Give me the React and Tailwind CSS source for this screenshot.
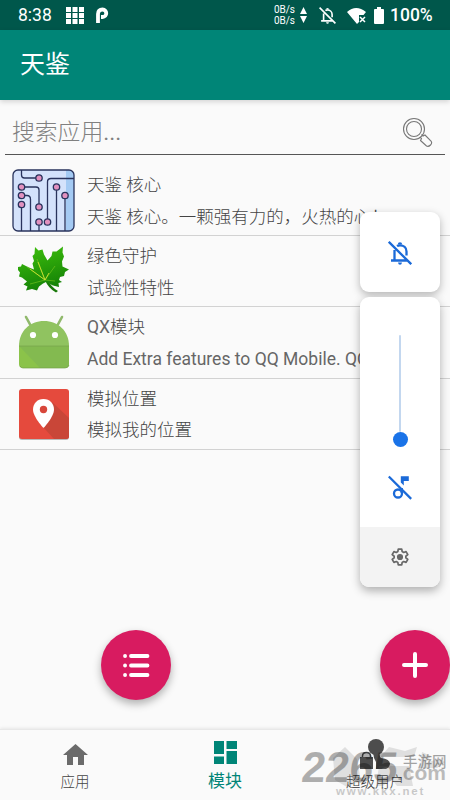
const textFont = "font-[Roboto,'Noto_Sans_CJK_SC',sans-serif]";

function CircuitIcon() {
  const dots = [[27, 9], [9.5, 18], [9.5, 26.5], [9.5, 35.5], [27, 38], [27, 53], [35.5, 53], [44.5, 18], [53, 26.5]];
  return (
    <svg width="63" height="63" viewBox="0 0 63 63" fill="none" stroke="#29335c" strokeWidth="1.3">
      <rect x="1" y="1" width="61" height="61" rx="5" fill="#d4e2fb" stroke="none" />
      <path d="M54 1h3a5 5 0 0 1 5 5v51a5 5 0 0 1-5 5h-3z" fill="#a4caf3" stroke="none" />
      <path d="M9.5 1v5q0 3 3 3H24M12.500 18H24q3 0 3 3v14M12.500 26.500H15q3.500 0 3.500 4V62M9.500 38.500V62M27 56v6M35.500 50V13q0-3.500 3.500-3.500H62M44.500 21v41M53 29.500V62" />
      <rect x="1" y="1" width="61" height="61" rx="5" />
      {dots.map(([x, y]) => <circle key={x + "-" + y} cx={x} cy={y} r="3.2" fill="#e291bf" />)}
    </svg>
  );
}

function LeafIcon() {
  return (
    <svg width="52" height="52" viewBox="0 0 52 52">
      <defs>
        <linearGradient id="leaf" x1="0" y1="0" x2="0.3" y2="1">
          <stop offset="0" stopColor="#3fc20c" />
          <stop offset="1" stopColor="#168407" />
        </linearGradient>
      </defs>
      <path d="M27 35Q30 43 38 47.500l2-1.500Q33 42 29 34z" fill="#197809" />
      <path d="M17 2l3.500 3.500 4-1 1.500 5 3.500 6 4-4.500 1-4.500 4 0 6.500-5-.5 6 1.500 4-2 5 .5 5 6.500 3-4 2.500-1 4-4 1-1 3 3 2-3.500 1 .5 4-6-1.500-7-3.500-3 1.500-4 3-2 4-5-1.500-6 1.500 1.500-4-4-2 3.500-3-5-4-3-1 1-4-4-5 5-1 1-2.500 7 3.500 5 2-1.500-6 1.500-2.500-1.500-5 2-2z" fill="url(#leaf)" />
      <path d="M27 35L9 22M27 35L19 14M27 35L37 21M27 35L12 39M27 35l10 1" stroke="#6fc01c" strokeWidth=".7" fill="none" />
      <path d="M27 35L12 24M27 35L20 17M27 35l4-7" stroke="#cfe033" strokeWidth=".9" />
    </svg>
  );
}

function AndroidIcon() {
  return (
    <svg width="52" height="54" viewBox="0 0 52 54">
      <path d="M8 2l6 11M44 2l-6 11" stroke="#90b96c" strokeWidth="2.600" strokeLinecap="round" />
      <path d="M1 31C1 16 12 6 26 6s25 10 25 25z" fill="#90c360" />
      <path d="M1 31h50v18q0 4-4 4H5q-4 0-4-4z" fill="#8bc34a" />
      <path d="M1 31h50v18q0 4-4 4H22z" fill="#80b553" opacity=".65" />
      <path d="M1 31h50" stroke="#78a64d" strokeWidth=".8" />
      <path d="M2 51q1 2 3 2h42q3 0 4-3" stroke="#74a048" strokeWidth=".7" fill="none" />
      <circle cx="15" cy="20" r="3.100" fill="#fff" />
      <circle cx="37" cy="20" r="3.100" fill="#fff" />
    </svg>
  );
}

function PlaceIcon() {
  return (
    <svg width="52" height="52" viewBox="0 0 52 52">
      <rect x="1" y="2" width="50" height="50" rx="3" fill="#b9b9b9" />
      <rect x="1" y="1" width="50" height="50" rx="3" fill="#e54a3d" />
      <path d="M34 14l17 16v18q0 3-3 3H36L25 39z" fill="#c94638" />
      <path d="M25.500 11C19 11 15 16 15 21.500 15 29 25.500 40 25.500 40S36 29 36 21.500C36 16 32 11 25.500 11z" fill="#fff" />
      <circle cx="25.500" cy="21.500" r="3.700" fill="#d8473b" />
    </svg>
  );
}

function BellOff({ className }) {
  return (
    <svg className={className} viewBox="0 0 24 24" fill="none" stroke="currentColor" strokeWidth="2.3">
      <path d="M3 19.500h16M6.500 19V9M9 5q1-.7 3-.7c3.500 0 6.500 2.400 6.500 6.200v4M.8.8l22.400 22.400" />
      <path d="M9.800 3.500a2.200 2.200 0 1 1 4.400 0M10 21.500h4q-.3 2.300-2 2.300t-2-2.300z" fill="currentColor" stroke="none" />
    </svg>
  );
}

function StatusBar() {
  return (
    <div className="flex h-[30px] shrink-0 items-center bg-[#00574b] text-white">
      <span className="ml-[18px] w-[48px] text-[17.5px]">8:38</span>
      <svg width="18" height="17" viewBox="0 0 18 17" fill="currentColor">
        <path d="M0 0h5v5H0zM6.500 0h5v5h-5zM13 0h5v5h-5zM0 6h5v5H0zM6.500 6h5v5h-5zM13 6h5v5h-5zM0 12h5v5H0zM6.500 12h5v5h-5zM13 12h5v5h-5z" />
      </svg>
      <svg className="ml-3" width="13" height="17" viewBox="0 0 13 17" fill="none" stroke="currentColor" strokeWidth="3.8">
        <path d="M2 16V7q0-4.500 4.500-4.500c5 0 5 7.500 0 7.500H5" />
      </svg>
      <div className="ml-[165px] flex w-[22px] flex-col text-[10px] leading-[11.5px] tracking-[-0.1px]">
        <span>0B/s</span>
        <span>0B/s</span>
      </div>
      <svg className="ml-[4px]" width="7" height="16" viewBox="0 0 7 16" fill="currentColor">
        <path d="M3.500 0L7 7H0zM0 9h7l-3.500 7z" />
      </svg>
      <BellOff className="ml-[12px] size-[17px]" />
      <svg className="ml-[11px]" width="20" height="17" viewBox="0 0 20 17" fill="currentColor">
        <path d="M0 5Q9-3 19 5l-2.500 3H12v7l-2 2z" />
        <path d="M13 10l5 5m0-5l-5 5" stroke="currentColor" strokeWidth="1.500" />
      </svg>
      <svg className="ml-[7px]" width="10" height="17" viewBox="0 0 10 17" fill="currentColor">
        <path d="M3 0h4v2h2q1 0 1 1v13q0 1-1 1H1q-1 0-1-1V3q0-1 1-1h2z" />
      </svg>
      <span className="ml-[6px] text-[17.5px] font-medium">100%</span>
    </div>
  );
}

const modules = [
  { title: "天鉴 核心", desc: "天鉴 核心。一颗强有力的，火热的心！", icon: <CircuitIcon /> },
  { title: "绿色守护", desc: "试验性特性", icon: <LeafIcon /> },
  { title: "QX模块", desc: "Add Extra features to QQ Mobile. QQ", icon: <AndroidIcon /> },
  { title: "模拟位置", desc: "模拟我的位置", icon: <PlaceIcon /> },
];

// latin text is regular weight, the CJK face next to it is the light one
function Mixed({ text }) {
  return text.split(/([A-Za-z][A-Za-z .]*)/).map((part, i) =>
    /^[A-Za-z]/.test(part) ? <span key={i} className="font-normal text-[#666]">{part}</span> : part
  );
}

function ModuleList() {
  return (
    <div className="flex flex-col pt-[10px]">
      {modules.map((item) => (
        <div key={item.title} className="flex h-[71.2px] items-center border-b border-[#d2d2d2]">
          <div className="flex w-[87px] shrink-0 justify-center">{item.icon}</div>
          <div className="flex flex-col overflow-hidden pt-[3px] whitespace-nowrap text-[17.500px] leading-[31.500px] font-light text-[#444]">
            <span><Mixed text={item.title} /></span>
            <span><Mixed text={item.desc} /></span>
          </div>
        </div>
      ))}
    </div>
  );
}

function VolumePanel() {
  return (
    <div className="absolute top-[212px] right-[10px] flex w-20 flex-col gap-[5px] text-[#1b6ad8]">
      <div className="flex h-20 items-center justify-center rounded-[9px] bg-white pt-px shadow-[0_3px_9px_rgba(0,0,0,0.28)]">
        <BellOff className="size-6" />
      </div>
      <div className="flex h-[290px] flex-col items-center overflow-hidden rounded-[9px] bg-white pt-[38px] shadow-[0_4px_10px_rgba(0,0,0,0.3)]">
        <div className="h-[97px] w-[2px] rounded bg-[#c3d7ef]" />
        <div className="size-[15px] rounded-full bg-[#1a73e8]" />
        <svg className="mt-7" width="24" height="25" viewBox="0 0 24 25" fill="none" stroke="currentColor" strokeWidth="2.3">
          <circle cx="10" cy="18.500" r="4" />
          <path d="M.8 1.500l22.400 22.400M13.800 13v5" />
          <path d="M12.800 1.200h8V6h-5v4.500l-3-3z" fill="currentColor" stroke="none" />
        </svg>
        <div className="mt-auto flex h-[60px] w-full items-center justify-center bg-[#f3f3f3]">
          <svg width="18" height="18" viewBox="0 0 24 24" fill="none" stroke="#686868" strokeWidth="2.3">
            <path strokeLinejoin="round" d="M9.700 1.500h4.600l.6 3.300 2 1.200 3.200-1.200 2.300 4L19.800 11v2l2.600 2.200-2.300 4-3.200-1.200-2 1.200-.6 3.300H9.700l-.6-3.300-2-1.200-3.200 1.200-2.300-4L4.200 13v-2L1.600 8.800l2.300-4L7.100 6l2-1.200z" />
            <circle cx="12" cy="12" r="3" fill="#686868" />
          </svg>
        </div>
      </div>
    </div>
  );
}

function BottomNav() {
  return (
    <div className="grid h-[71px] shrink-0 grid-cols-3 border-t border-[#e8e8e8] bg-[#fafafa] text-[#444] shadow-[0_-1px_3px_rgba(0,0,0,0.08)]">
      <div className="flex flex-col items-center pt-[14px]">
        <svg width="25" height="21" viewBox="0 0 25 21" fill="#6b6b6b"><path d="M12.500 0L25 11h-4v10h-6v-8h-5v8H4V11H0z" /></svg>
        <span className="mt-[8px] text-[14.500px] leading-5 font-light">应用</span>
      </div>
      <div className="flex flex-col items-center pt-[11px] text-[#008577]">
        <svg width="23" height="23" viewBox="0 0 23 23" fill="currentColor"><path d="M0 0h10v13H0zM12.500 0H23v8H12.500zM0 15.500h10V23H0zM12.500 10H23v13H12.500z" /></svg>
        <span className="mt-[5px] text-[17px] leading-6">模块</span>
      </div>
      <div className="flex flex-col items-center pt-[9px] text-[#333]">
        <svg width="30" height="31" viewBox="0 0 30 31" fill="#4d4d4d">
          <circle cx="16" cy="8" r="8" />
          <path d="M13 13h7q-1 4 1 6 9 1 9 6-1 4-4 5H16V23l-2-4zM0 18h13v12H0z" />
          <path d="M2.500 19v-2q0-3.500 4-3.500t4 3.500v2" fill="none" stroke="#4d4d4d" strokeWidth="1.500" />
        </svg>
        <span className="mt-[3px] text-[14.500px] leading-5 font-light">超级用户</span>
      </div>
    </div>
  );
}

function SiteMark() {
  return (
    <div className="pointer-events-none absolute right-0 bottom-0 h-[56px] w-[151px] font-['Liberation_Sans','Noto_Sans_CJK_SC',sans-serif] font-bold text-black">
      <svg className="absolute top-[2px] left-[32px]" width="115" height="42" viewBox="0 0 115 42" fill="#777" opacity=".2">
        <path d="M2 12L14 1l12 12 4 22-14 6L4 34zM50 10l8-9 16 4 12-4-3 10H50zM48 20h30l4 20H66l-6-8-8 8h-7zM91 6l9 4-6 7 14-4 6 3-8 6H89z" />
      </svg>
      <span className="absolute top-[2px] left-[3px] -skew-x-6 text-[43px] leading-[42px] opacity-30">2265</span>
      <span className="absolute top-[10px] left-[104px] text-[14.500px] leading-4 font-medium whitespace-nowrap opacity-35">手游网</span>
      <span className="absolute top-[17px] left-[98px] text-[21px] leading-6 opacity-25">.com</span>
      <span className="absolute top-[41px] left-[37px] text-[11.5px] leading-3 tracking-[1.8px] opacity-20">www.kkx.net</span>
    </div>
  );
}

export default function App() {
  return (
    <div className={`${textFont} relative flex h-[800px] w-[450px] flex-col overflow-hidden bg-[#fafafa]`}>
      <StatusBar />
      <header className="flex h-[70px] shrink-0 items-center bg-[#008577] pl-[20px] text-[25px] text-white shadow-[0_2px_5px_rgba(0,0,0,0.15)]">天鉴</header>
      <main className="flex-1">
        <div className="mx-[5px] flex h-[55px] items-center justify-between border-b border-[#555] pt-[10px] pr-3 pl-[7px]">
          <span className="pt-[3px] text-[22.800px] font-light text-[#808080]">搜索应用<span className="font-normal">...</span></span>
          <svg width="31" height="31" viewBox="0 0 31 31" fill="none" stroke="#777" strokeWidth="1.100">
            <circle cx="12" cy="12" r="10.500" />
            <circle cx="12" cy="12" r="7.500" />
            <path d="M18 20l1.500 1.500-1 2 6 5.500q2 1 4-1t.5-4L23 18l-2 1-1.500-1.500" />
          </svg>
        </div>
        <ModuleList />
      </main>
      <button className="absolute top-[630px] left-[101px] flex size-[70px] items-center justify-center rounded-full bg-[#d81b60] shadow-[0_4px_8px_rgba(0,0,0,0.3)]">
        <svg width="27" height="23" viewBox="0 0 27 23" stroke="#fff" strokeWidth="3.800" strokeLinecap="round">
          <path d="M2 2h.1M8 2h16.500M2 11.500h.1M8 11.500h16.500M2 21h.1M8 21h16.500" />
        </svg>
      </button>
      <button className="absolute top-[630px] right-0 flex size-[70px] items-center justify-center rounded-full bg-[#d81b60] shadow-[0_4px_8px_rgba(0,0,0,0.3)]">
        <svg width="26" height="26" viewBox="0 0 26 26" stroke="#fff" strokeWidth="4" strokeLinecap="round">
          <path d="M13 2v22M2 13h22" />
        </svg>
      </button>
      <VolumePanel />
      <BottomNav />
      <SiteMark />
    </div>
  );
}
